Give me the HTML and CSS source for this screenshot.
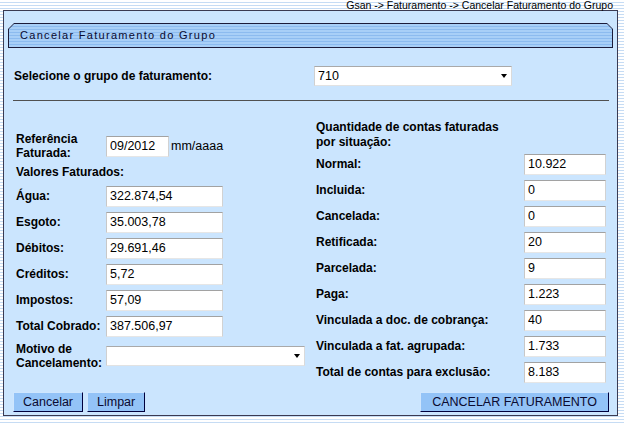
FILE: index.html
```html
<!DOCTYPE html>
<html lang="pt-BR">
<head>
    <meta charset="UTF-8">
    <title>Cancelar Faturamento do Grupo</title>
    <link rel="stylesheet" href="styles.css">
</head>
<body>
    <div class="crumb">Gsan -&gt; Faturamento -&gt; Cancelar Faturamento do Grupo</div>
    <div class="panel">
        <div class="title-frame">
            <div class="title">Cancelar Faturamento do Grupo</div>
        </div>
        <form class="form" onsubmit="return false">
            <div class="group-row">
                <label>Selecione o grupo de faturamento:</label>
                <span class="sel sel-group">
                    <select>
                        <option>710</option>
                    </select>
                </span>
            </div>
            <hr>
            <div class="cols">
                <div class="col left">
                    <div class="row row-ref">
                        <label>Referência<br>Faturada:</label>
                        <input type="text" class="ref" value="09/2012">
                        <span class="hint">mm/aaaa</span>
                    </div>
                    <div class="row row-head">
                        <label class="head">Valores Faturados:</label>
                    </div>
                    <div class="row"><label>Água:</label><input type="text" class="money" value="322.874,54"></div>
                    <div class="row"><label>Esgoto:</label><input type="text" class="money" value="35.003,78"></div>
                    <div class="row"><label>Débitos:</label><input type="text" class="money" value="29.691,46"></div>
                    <div class="row"><label>Créditos:</label><input type="text" class="money" value="5,72"></div>
                    <div class="row"><label>Impostos:</label><input type="text" class="money" value="57,09"></div>
                    <div class="row"><label>Total Cobrado:</label><input type="text" class="money" value="387.506,97"></div>
                    <div class="row row-motivo">
                        <label>Motivo de<br>Cancelamento:</label>
                        <span class="sel sel-motivo">
                            <select>
                                <option></option>
                            </select>
                        </span>
                    </div>
                </div>
                <div class="col right">
                    <div class="right-head">Quantidade de contas faturadas<br>por situação:</div>
                    <div class="row"><label>Normal:</label><input type="text" class="qty" value="10.922"></div>
                    <div class="row"><label>Incluida:</label><input type="text" class="qty" value="0"></div>
                    <div class="row"><label>Cancelada:</label><input type="text" class="qty" value="0"></div>
                    <div class="row"><label>Retificada:</label><input type="text" class="qty" value="20"></div>
                    <div class="row"><label>Parcelada:</label><input type="text" class="qty" value="9"></div>
                    <div class="row"><label>Paga:</label><input type="text" class="qty" value="1.223"></div>
                    <div class="row"><label>Vinculada a doc. de cobrança:</label><input type="text" class="qty" value="40"></div>
                    <div class="row"><label>Vinculada a fat. agrupada:</label><input type="text" class="qty" value="1.733"></div>
                    <div class="row"><label>Total de contas para exclusão:</label><input type="text" class="qty" value="8.183"></div>
                </div>
            </div>
            <div class="actions">
                <button class="btn">Cancelar</button>
                <button class="btn">Limpar</button>
                <button class="btn btn-main">CANCELAR FATURAMENTO</button>
            </div>
        </form>
    </div>
</body>
</html>
```

FILE: styles.css
```css
* {
    box-sizing: border-box;
}

body {
    margin: 0;
    height: 424px;
    overflow: hidden;
    font-family: "Liberation Sans", Arial, sans-serif;
    color: #000;
    background: repeating-linear-gradient(to bottom, #fff 0 2px, #c6dcf4 2px 3px);
}

.crumb {
    height: 10px;
    line-height: 10px;
    font-size: 10.5px;
    text-align: right;
    padding-right: 11px;
}

.panel {
    margin: 0 6px 0 3px;
    border: 1px solid #3a3a52;
    background: #cbe5fe;
    padding: 12px 4px 3px 4px;
}

.title-frame {
    height: 25px;
    padding: 1px;
    background: #1c1c3a;
    clip-path: polygon(6px 0, calc(100% - 6px) 0, 100% 6px, 100% 100%, 0 100%, 0 6px);
}

.title {
    height: 100%;
    padding-left: 11px;
    line-height: 23px;
    font-size: 11px;
    letter-spacing: 1.3px;
    color: #0a0a30;
    background: repeating-linear-gradient(to bottom, #a8cff7 0 2px, #8cbbef 2px 3px);
    clip-path: polygon(5px 0, calc(100% - 5px) 0, 100% 5px, 100% 100%, 0 100%, 0 5px);
}

.form {
    padding: 0 4px 0 5px;
}

label {
    font-size: 12px;
    font-weight: bold;
    line-height: 14px;
}

.group-row {
    display: flex;
    align-items: center;
    height: 20px;
    margin-top: 18px;
}

.group-row label {
    width: 301px;
    padding-left: 1px;
}

hr {
    border: 0;
    border-top: 1px solid #505050;
    margin: 14px 0 19px;
}

.cols {
    display: grid;
    grid-template-columns: 300px 1fr;
    align-items: start;
}

.col {
    padding-left: 3px;
}

.left {
    margin-top: 11px;
}

.row {
    display: flex;
    align-items: center;
    height: 26px;
}

.left .row label {
    width: 90px;
    flex: none;
}

.right .row label {
    width: 208px;
    flex: none;
}

.row-ref {
    height: 30px;
}

.row-head {
    height: 22px;
}

.left .row-head label {
    width: auto;
}

.row-motivo {
    height: 33px;
}

.right-head {
    font-size: 12px;
    font-weight: bold;
    line-height: 15px;
    margin-bottom: 1px;
}

input {
    height: 21px;
    padding: 0 3px;
    font-family: inherit;
    font-size: 12.5px;
    color: #000;
    background: #fff;
    border: 1px solid;
    border-color: #a2a2a2 #d2d2d2 #e6e6e6 #c8c8c8;
    outline: none;
}

input.ref {
    width: 63px;
}

input.money {
    width: 117px;
}

input.qty {
    width: 82px;
}

.hint {
    margin-left: 2px;
    font-size: 12.5px;
}

.sel {
    position: relative;
    display: inline-block;
}

.sel select {
    appearance: none;
    -webkit-appearance: none;
    width: 100%;
    height: 100%;
    padding: 0 3px;
    font-family: inherit;
    font-size: 12.5px;
    color: #000;
    background: #fff;
    border: 1px solid;
    border-color: #a9a9a9 #dadada #e2e2e2 #d0d0d0;
    outline: none;
}

.sel::after {
    content: "";
    position: absolute;
    right: 5px;
    top: 50%;
    margin-top: -2px;
    border-left: 3.5px solid transparent;
    border-right: 3.5px solid transparent;
    border-top: 4px solid #000;
    pointer-events: none;
}

.sel-group {
    width: 198px;
    height: 20px;
}

.sel-motivo {
    width: 199px;
    height: 20px;
}

.actions {
    display: flex;
    gap: 4px;
    margin-top: 7px;
}

.btn {
    height: 20px;
    padding: 0 9px;
    font-family: inherit;
    font-size: 12.5px;
    color: #0a0a30;
    background: #93c3f7;
    border: 1px solid;
    border-color: #cfe6fe #00003c #00003c #cfe6fe;
    cursor: pointer;
}

.btn:hover {
    background: #a4cdf9;
}

.btn-main {
    margin-left: auto;
    padding: 0 11px;
}
```
